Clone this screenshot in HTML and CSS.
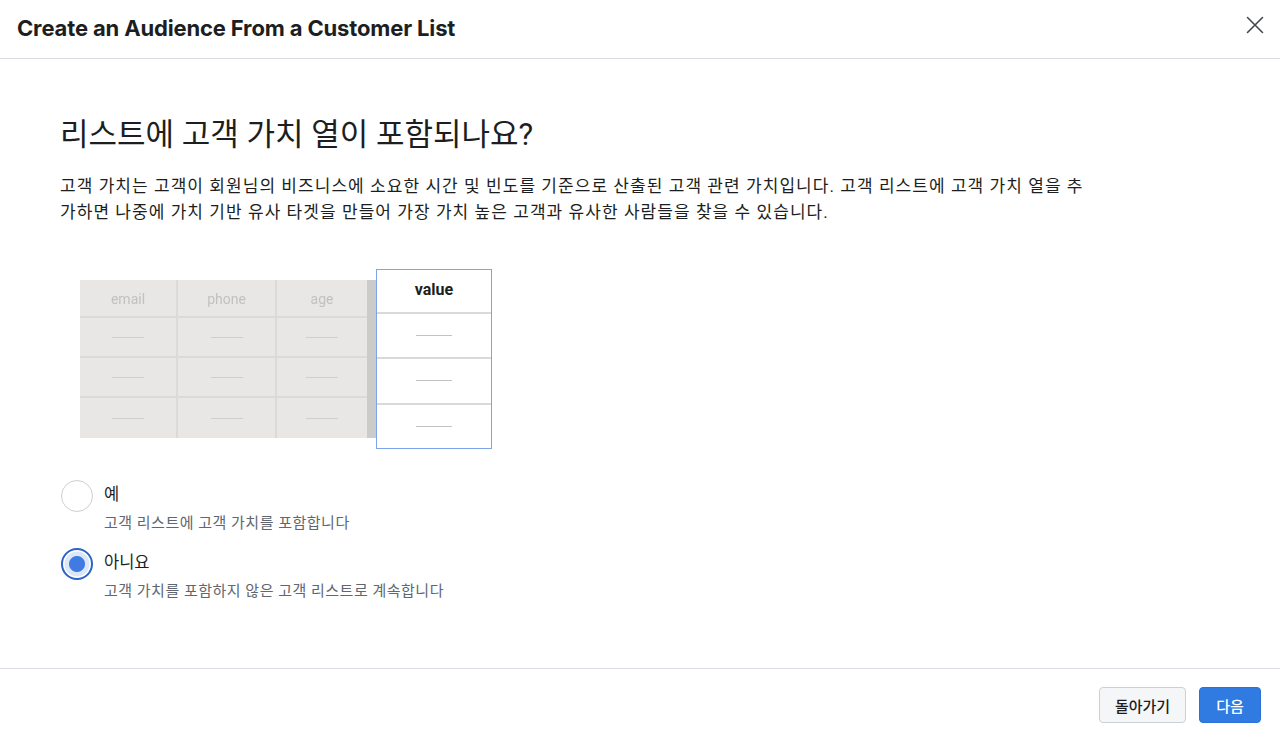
FILE: index.html
```html
<!DOCTYPE html>
<html lang="ko">
<head>
<meta charset="utf-8">
<title>Create an Audience From a Customer List</title>
<link rel="stylesheet" href="styles.css">
</head>
<body>
<div class="dialog">
  <header class="dlg-header">
    <h1 class="dlg-title">Create an Audience From a Customer List</h1>
    <button class="close" aria-label="Close">
      <svg width="18" height="18" viewBox="0 0 18 18"><path d="M1.5 1.5 L16.5 16.5 M16.5 1.5 L1.5 16.5" stroke="#444950" stroke-width="1.6" fill="none" stroke-linecap="round"/></svg>
    </button>
  </header>
  <main class="dlg-body">
    <h2 class="question">리스트에 고객 가치 열이 포함되나요?</h2>
    <p class="desc">고객 가치는 고객이 회원님의 비즈니스에 소요한 시간 및 빈도를 기준으로 산출된 고객 관련 가치입니다. 고객 리스트에 고객 가치 열을 추가하면 나중에 가치 기반 유사 타겟을 만들어 가장 가치 높은 고객과 유사한 사람들을 찾을 수 있습니다.</p>

    <div class="illus">
      <div class="grey-table">
        <div class="gt-grid">
          <div class="gt-cell gt-head">email</div>
          <div class="gt-cell gt-head">phone</div>
          <div class="gt-cell gt-head">age</div>
          <div class="gt-cell"><span class="dash"></span></div>
          <div class="gt-cell"><span class="dash"></span></div>
          <div class="gt-cell"><span class="dash"></span></div>
          <div class="gt-cell"><span class="dash"></span></div>
          <div class="gt-cell"><span class="dash"></span></div>
          <div class="gt-cell"><span class="dash"></span></div>
          <div class="gt-cell"><span class="dash"></span></div>
          <div class="gt-cell"><span class="dash"></span></div>
          <div class="gt-cell"><span class="dash"></span></div>
        </div>
        <div class="gt-strip"></div>
      </div>
      <div class="value-col">
        <div class="vc-head">value</div>
        <div class="vc-cell"><span class="vdash"></span></div>
        <div class="vc-cell"><span class="vdash"></span></div>
        <div class="vc-cell last"><span class="vdash"></span></div>
      </div>
    </div>

    <div class="options">
      <label class="option">
        <span class="radio"></span>
        <span class="opt-text">
          <span class="opt-label">예</span>
          <span class="opt-sub">고객 리스트에 고객 가치를 포함합니다</span>
        </span>
      </label>
      <label class="option">
        <span class="radio checked"></span>
        <span class="opt-text">
          <span class="opt-label">아니요</span>
          <span class="opt-sub">고객 가치를 포함하지 않은 고객 리스트로 계속합니다</span>
        </span>
      </label>
    </div>
  </main>
  <footer class="dlg-footer">
    <button class="btn btn-secondary">돌아가기</button>
    <button class="btn btn-primary">다음</button>
  </footer>
</div>
</body>
</html>
```

FILE: styles.css
```css
* { box-sizing: border-box; }
html, body { margin: 0; padding: 0; background: #ffffff; }
body {
  font-family: Roboto, "Noto Sans CJK KR", "Noto Sans", sans-serif;
  color: #1c1e21;
}
.dialog {
  width: 1280px;
  height: 741px;
  display: flex;
  flex-direction: column;
}
.dlg-header {
  height: 59px;
  border-bottom: 1px solid #dadde1;
  display: flex;
  align-items: center;
  justify-content: space-between;
  padding: 0 16px 2px 17px;
}
.dlg-title {
  margin: 0;
  font-family: Inter, Roboto, sans-serif;
  font-size: 22px;
  font-weight: 700;
  letter-spacing: -0.15px;
  color: #1c1e21;
}
.close {
  border: 0;
  background: none;
  padding: 0;
  width: 18px;
  height: 18px;
  margin-top: -6px;
  cursor: pointer;
  display: flex;
}
.dlg-body {
  flex: 1;
  padding: 56px 60px 0 60px;
}
.question {
  margin: 0;
  font-size: 31px;
  line-height: 40px;
  font-weight: 400;
  color: #1c1e21;
}
.desc {
  margin: 18px 0 0 0;
  width: 1026px;
  font-size: 17px;
  letter-spacing: 1.05px;
  line-height: 26px;
  color: #1c1e21;
}
.illus {
  margin-top: 44px;
  margin-left: 20px;
  display: flex;
  align-items: flex-start;
}
.grey-table {
  margin-top: 11px;
  display: flex;
  height: 158px;
  background: #e8e7e5;
  filter: blur(0.6px);
}
.gt-grid {
  display: grid;
  grid-template-columns: 98px 99px 90px;
  grid-template-rows: 38px 40px 40px 40px;
}
.gt-cell {
  border-right: 2px solid #dbdad7;
  border-bottom: 2px solid #dbdad7;
  display: flex;
  align-items: center;
  justify-content: center;
}
.gt-cell:nth-child(3n) { border-right: 0; }
.gt-cell:nth-last-child(-n+3) { border-bottom: 0; }
.gt-head {
  font-size: 14px;
  color: #c2c1bf;
  padding-top: 2px;
}
.dash {
  display: block;
  width: 32px;
  height: 1px;
  background: #cfcecb;
}
.gt-strip {
  width: 9px;
  background: #cbcbca;
}
.value-col {
  width: 116px;
  height: 180px;
  border: 1.5px solid #7ea4ec;
  background: #fff;
  display: flex;
  flex-direction: column;
}
.vc-head {
  height: 44px;
  border-bottom: 2px solid #dcd8d5;
  display: flex;
  align-items: center;
  justify-content: center;
  font-size: 16px;
  font-weight: 700;
  color: #1c1e21;
  padding-bottom: 3px;
}
.vc-cell {
  flex: 1;
  border-bottom: 2px solid #dcd8d5;
  display: flex;
  align-items: center;
  justify-content: center;
}
.vc-cell.last { border-bottom: 0; }
.vdash {
  display: block;
  width: 36px;
  height: 1px;
  background: #c4c2c0;
}
.options {
  margin-top: 31px;
  display: flex;
  flex-direction: column;
  gap: 15px;
}
.option {
  display: flex;
  align-items: flex-start;
  gap: 11px;
}
.radio {
  flex: none;
  width: 32px;
  height: 32px;
  margin-left: 1px;
  border-radius: 50%;
  border: 1.5px solid #ccd0d5;
  background: #fff;
}
.radio.checked {
  border: 2px solid #2a63c9;
  background: radial-gradient(circle, #3f7be1 0, #3f7be1 7.5px, #dde7fa 8.5px, #dde7fa 12px, #ffffff 13px);
}
.opt-text {
  display: flex;
  flex-direction: column;
  padding-top: 4px;
}
.opt-label {
  font-size: 16.5px;
  line-height: 22px;
  color: #1c1e21;
}
.opt-sub {
  margin-top: 7px;
  font-size: 15px;
  letter-spacing: 0.5px;
  line-height: 20px;
  color: #606770;
}
.dlg-footer {
  height: 73px;
  border-top: 1px solid #dadde1;
  display: flex;
  justify-content: flex-end;
  align-items: flex-start;
  gap: 13px;
  padding: 18px 19px 0 0;
}
.btn {
  height: 36px;
  border-radius: 4px;
  font-family: Roboto, "Noto Sans CJK KR", sans-serif;
  font-size: 15px;
  font-weight: 500;
  padding: 0 12px;
  cursor: pointer;
}
.btn-secondary {
  width: 87px;
  background: #f5f6f7;
  border: 1px solid #ccd0d5;
  color: #1c1e21;
}
.btn-primary {
  width: 62px;
  background: #2f7be2;
  border: 1px solid #2a72d6;
  color: #ffffff;
}
```
